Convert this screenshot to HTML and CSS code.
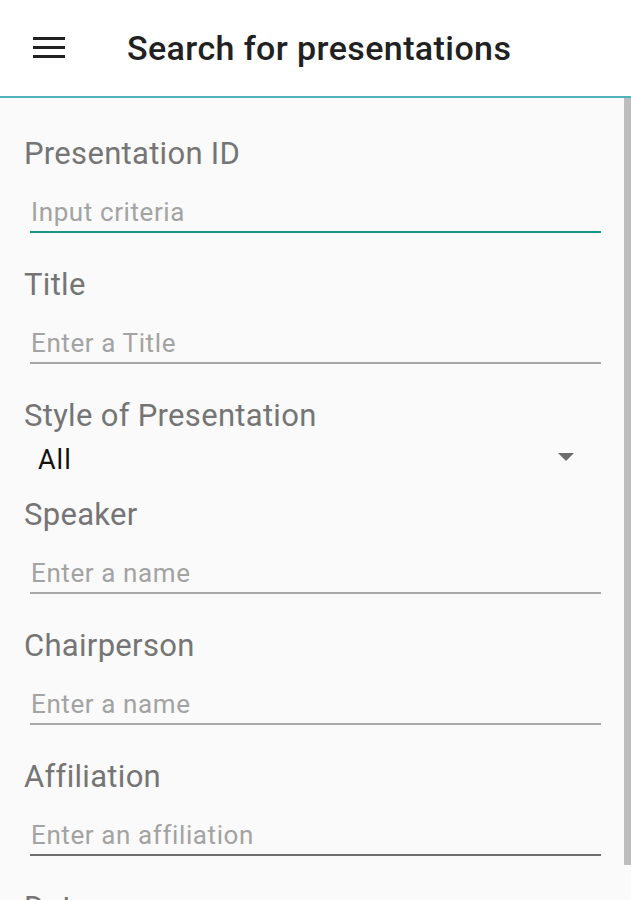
FILE: index.html
```html
<!DOCTYPE html>
<html lang="en">
<head>
    <meta charset="UTF-8">
    <meta name="viewport" content="width=device-width, initial-scale=1.0">
    <title>Search for presentations</title>
    <link rel="stylesheet" href="styles.css">
</head>
<body>
    <header class="toolbar">
        <button class="menu-btn" type="button" aria-label="Menu">
            <svg width="32" height="22" viewBox="0 0 32 22">
                <rect x="0" y="0" width="32" height="3" fill="#212121"/>
                <rect x="0" y="9" width="32" height="3" fill="#212121"/>
                <rect x="0" y="18" width="32" height="3" fill="#212121"/>
            </svg>
        </button>
        <h1 class="toolbar-title">Search for presentations</h1>
    </header>

    <main class="search-form">
        <div class="field">
            <label class="field-label" for="pid">Presentation ID</label>
            <input class="field-input focused" id="pid" type="text" placeholder="Input criteria">
        </div>

        <div class="field">
            <label class="field-label" for="title">Title</label>
            <input class="field-input" id="title" type="text" placeholder="Enter a Title">
        </div>

        <div class="field field-select">
            <span class="field-label">Style of Presentation</span>
            <div class="select-row">
                <span class="select-value">All</span>
                <span class="select-arrow"></span>
            </div>
        </div>

        <div class="field">
            <label class="field-label" for="speaker">Speaker</label>
            <input class="field-input" id="speaker" type="text" placeholder="Enter a name">
        </div>

        <div class="field">
            <label class="field-label" for="chair">Chairperson</label>
            <input class="field-input" id="chair" type="text" placeholder="Enter a name">
        </div>

        <div class="field">
            <label class="field-label" for="affil">Affiliation</label>
            <input class="field-input dark" id="affil" type="text" placeholder="Enter an affiliation">
        </div>

        <div class="field">
            <label class="field-label" for="date">Date</label>
            <input class="field-input" id="date" type="text" placeholder="Select a date">
        </div>

        <div class="scroll-thumb"></div>
    </main>
</body>
</html>
```

FILE: styles.css
```css
html, body {
    margin: 0;
    padding: 0;
    height: 100%;
    overflow: hidden;
}
body {
    font-family: Roboto, "Noto Sans", sans-serif;
    background-color: #fafafa;
}
.toolbar {
    display: flex;
    align-items: center;
    height: 96px;
    background: white;
    border-bottom: 2px solid #4fb3bb;
}
.menu-btn {
    background: none;
    border: none;
    padding: 0;
    margin: -1px 0 0 33px;
    width: 32px;
    height: 22px;
    display: flex;
    cursor: pointer;
}
.toolbar-title {
    margin: 0 0 0 62px;
    font-size: 34px;
    font-weight: 500;
    letter-spacing: 0.4px;
    color: #212121;
}
.search-form {
    position: relative;
    padding: 39px 30px 0 24px;
}
.field {
    display: flex;
    flex-direction: column;
    margin-bottom: 35px;
}
.field-label {
    font-size: 31px;
    line-height: 34px;
    letter-spacing: 0.3px;
    color: #757575;
}
.field-input {
    margin: 27px 0 0 6px;
    padding: 0 1px 5px;
    height: 28px;
    font-family: inherit;
    font-size: 26px;
    line-height: 28px;
    letter-spacing: 0.6px;
    color: #212121;
    background: transparent;
    border: none;
    border-bottom: 2px solid #a8a8a8;
    outline: none;
}
.field-input::placeholder {
    color: #a3a3a3;
}
.field-input.focused {
    border-bottom-color: #1a9484;
}
.field-input.dark {
    border-bottom-color: #6e6e6e;
}
.field-select {
    margin-bottom: 21px;
}
.select-row {
    display: flex;
    align-items: center;
    justify-content: space-between;
    margin-top: 10px;
    height: 34px;
    padding: 0 27px 0 14px;
}
.select-value {
    font-size: 27px;
    line-height: 34px;
    letter-spacing: 1px;
    color: #111;
}
.select-arrow {
    width: 0;
    height: 0;
    border-left: 8px solid transparent;
    border-right: 8px solid transparent;
    border-top: 8px solid #6d6d6d;
    margin-top: -6px;
}
.scroll-thumb {
    position: absolute;
    top: 0;
    right: 0;
    width: 7px;
    height: 767px;
    background: #bdbdbd;
}
```
